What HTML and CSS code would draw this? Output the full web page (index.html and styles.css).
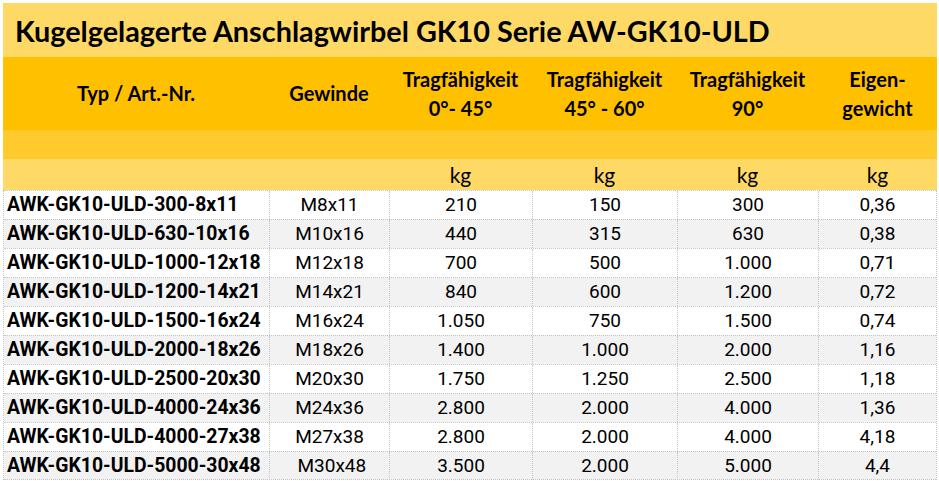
FILE: index.html
```html
<!DOCTYPE html>
<html lang="de">
<head>
<meta charset="utf-8">
<link rel="stylesheet" href="styles.css">
</head>
<body>
<div class="sheet">
  <div class="title">Kugelgelagerte Anschlagwirbel GK10 Serie AW-GK10-ULD</div>
  <div class="grid head">
    <div>Typ / Art.-Nr.</div>
    <div>Gewinde</div>
    <div>Tragfähigkeit<br>0°- 45°</div>
    <div>Tragfähigkeit<br>45° - 60°</div>
    <div>Tragfähigkeit<br>90°</div>
    <div>Eigen-<br>gewicht</div>
  </div>
  <div class="spacer"></div>
  <div class="grid units">
    <div></div><div></div><div>kg</div><div>kg</div><div>kg</div><div>kg</div>
  </div>
  <div class="rows">
    <div class="grid row"><div class="name">AWK-GK10-ULD-300-8x11</div><div>M8x11</div><div>210</div><div>150</div><div>300</div><div>0,36</div></div>
    <div class="grid row alt"><div class="name">AWK-GK10-ULD-630-10x16</div><div>M10x16</div><div>440</div><div>315</div><div>630</div><div>0,38</div></div>
    <div class="grid row"><div class="name">AWK-GK10-ULD-1000-12x18</div><div>M12x18</div><div>700</div><div>500</div><div>1.000</div><div>0,71</div></div>
    <div class="grid row alt"><div class="name">AWK-GK10-ULD-1200-14x21</div><div>M14x21</div><div>840</div><div>600</div><div>1.200</div><div>0,72</div></div>
    <div class="grid row"><div class="name">AWK-GK10-ULD-1500-16x24</div><div>M16x24</div><div>1.050</div><div>750</div><div>1.500</div><div>0,74</div></div>
    <div class="grid row alt"><div class="name">AWK-GK10-ULD-2000-18x26</div><div>M18x26</div><div>1.400</div><div>1.000</div><div>2.000</div><div>1,16</div></div>
    <div class="grid row"><div class="name">AWK-GK10-ULD-2500-20x30</div><div>M20x30</div><div>1.750</div><div>1.250</div><div>2.500</div><div>1,18</div></div>
    <div class="grid row alt"><div class="name">AWK-GK10-ULD-4000-24x36</div><div>M24x36</div><div>2.800</div><div>2.000</div><div>4.000</div><div>1,36</div></div>
    <div class="grid row"><div class="name">AWK-GK10-ULD-4000-27x38</div><div>M27x38</div><div>2.800</div><div>2.000</div><div>4.000</div><div>4,18</div></div>
    <div class="grid row alt"><div class="name">AWK-GK10-ULD-5000-30x48</div><div>&nbsp;M30x48</div><div>3.500</div><div>2.000</div><div>5.000</div><div>4,4</div></div>
  </div>
</div>
</body>
</html>
```

FILE: styles.css
```css
html, body {
  margin: 0;
  padding: 0;
  background: #ffffff;
}
body {
  padding: 3px 0 0 3px;
}
.sheet {
  width: 934px;
  color: #000;
}
.title {
  height: 54px;
  background: #FFD966;
  font-family: Lato, "Open Sans", sans-serif;
  font-weight: 700;
  font-size: 28.8px;
  line-height: 56px;
  padding-left: 12px;
  box-sizing: border-box;
  white-space: nowrap;
}
.grid {
  display: grid;
  grid-template-columns: 266px 120px 143px 145px 141px 119px;
}
.head {
  height: 73px;
  background: #FFC000;
  font-family: Lato, "Open Sans", sans-serif;
  font-weight: 700;
  font-size: 20px;
  line-height: 29px;
  align-items: center;
  text-align: center;
}
.spacer {
  height: 29px;
  background: #FFCA2C;
}
.units {
  height: 31px;
  background: #FFD966;
  font-family: Lato, "Open Sans", sans-serif;
  font-size: 21px;
  line-height: 31px;
  text-align: center;
}
.rows {
  border-left: 1px dotted #c6c6c6;
  border-right: 1px dotted #c6c6c6;
  width: 934px;
  box-sizing: border-box;
}
.row {
  height: 29px;
  box-sizing: border-box;
  border-top: 1px dotted #c6c6c6;
  font-family: Roboto, "Open Sans", sans-serif;
  font-size: 19px;
  line-height: 28px;
  text-align: center;
  grid-template-columns: 265px 120px 143px 145px 141px 118px;
}
.row:last-child {
  border-bottom: 1px dotted #c6c6c6;
}
.row > div + div {
  border-left: 1px dotted #c6c6c6;
}
.row.alt {
  background: #F2F2F2;
}
.row .name {
  text-align: left;
  padding-left: 3px;
  font-weight: 700;
  font-size: 19.4px;
  white-space: nowrap;
}
```
